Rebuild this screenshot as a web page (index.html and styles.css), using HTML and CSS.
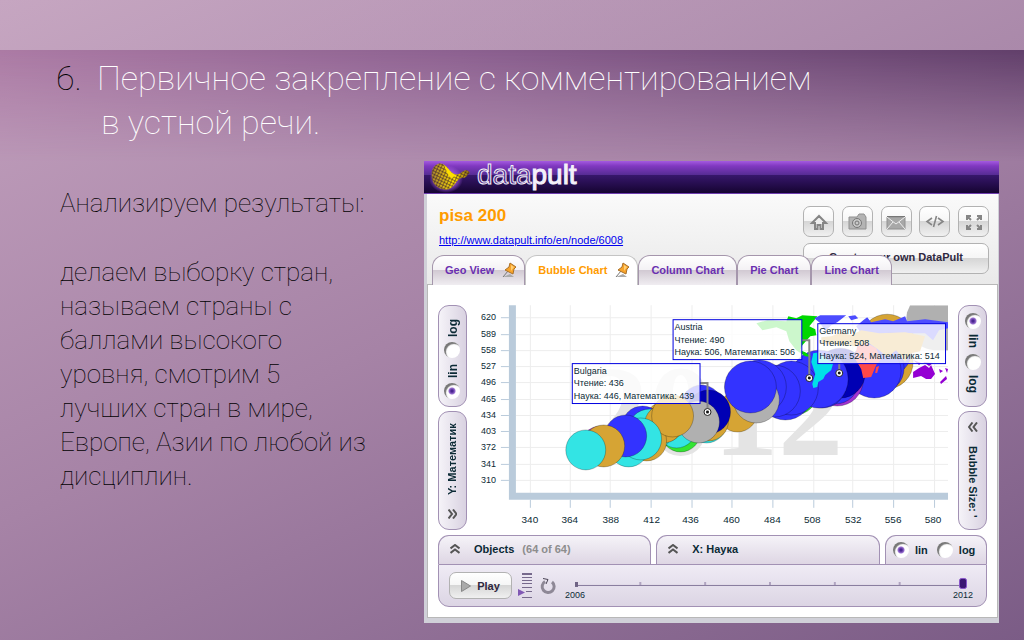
FILE: index.html
```html
<!DOCTYPE html>
<html lang="ru">
<head>
<meta charset="utf-8">
<title>Первичное закрепление</title>
<link rel="stylesheet" href="styles.css">
</head>
<body>
<main class="slide">
  <header class="slide-head">
    <h1 class="title"><span class="title-num">6.</span><span class="title-text">Первичное закрепление с комментированием<br><span class="title-second">в устной речи.</span></span></h1>
  </header>
  <div class="slide-body">
    <section class="notes">
      <p>Анализируем результаты:</p>
      <p>делаем выборку стран, называем страны с баллами высокого уровня, смотрим 5 лучших стран в мире, Европе, Азии по любой из дисциплин.</p>
    </section>
    <section class="widget">
      <div class="brand">
        <svg class="brand-mark" width="44" height="31" viewBox="0 0 44 31" aria-hidden="true">
          <defs>
            <radialGradient id="glow"><stop offset="0.5" stop-color="#a45ae0"/><stop offset="1" stop-color="#a45ae0" stop-opacity="0"/></radialGradient>
            <linearGradient id="gold" x1="0" x2="1"><stop offset="0" stop-color="#a88230"/><stop offset="0.6" stop-color="#ffe000"/><stop offset="1" stop-color="#8a6418"/></linearGradient>
            <pattern id="mesh" width="3" height="3" patternUnits="userSpaceOnUse" patternTransform="rotate(25)"><path d="M0 0H3M0 0V3" stroke="#2c1630" stroke-width="1"/></pattern>
          </defs>
          <ellipse cx="16" cy="17" rx="17" ry="14" fill="url(#glow)"/>
          <path d="M6 3C11 -1 16 3 20 9C25 14 29 13 32 10C36 7 38 8 40 11C37 12 37 16 33 16C28 15 26 22 21 26C15 30 4 26 2 17C1 10 2 6 6 3Z" fill="url(#gold)"/>
          <path d="M6 3C11 -1 16 3 20 9C25 14 29 13 32 10C36 7 38 8 40 11C37 12 37 16 33 16C28 15 26 22 21 26C15 30 4 26 2 17C1 10 2 6 6 3Z" fill="url(#mesh)"/>
          <path d="M14 3C18 5 20 11 26 13L22 16C17 14 17 9 14 3Z" fill="#ffe000"/>
        </svg>
        <span class="brand-name"><span class="brand-thin">data</span>pult</span>
      </div>
      <div class="frame">
        <div class="info">
          <div class="info-text">
            <h2>pisa 200</h2>
            <a href="#">http://www.datapult.info/en/node/6008</a>
          </div>
          <div class="actions">
            <div class="icon-row">
              <button class="icon-btn" aria-label="Home"><svg width="20" height="20" viewBox="0 0 20 20" fill="none" stroke="#858585" stroke-width="2"><path d="M3 11L10 4L17 11H14V17H11.5V13H8.500V17H6V11Z" fill="#eee"/></svg></button>
              <button class="icon-btn" aria-label="Camera"><svg width="20" height="20" viewBox="0 0 20 20"><path d="M2 5H10L12 2H17L19 5V17H2Z" fill="#b4b4b4" stroke="#909090"/><circle cx="10" cy="11" r="4.500" fill="#c8c8c8" stroke="#777"/><circle cx="10" cy="11" r="2" fill="none" stroke="#777"/></svg></button>
              <button class="icon-btn" aria-label="Mail"><svg width="20" height="20" viewBox="0 0 20 20"><path d="M1 5H19V17H1Z" fill="#a8a8a8" stroke="#909090"/><path d="M1 5L10 12L19 5M1 17L7 10M19 17L13 10" fill="none" stroke="#eee"/><path d="M1 4.500H19" stroke="#777"/></svg></button>
              <button class="icon-btn" aria-label="Embed"><svg width="20" height="20" viewBox="0 0 20 20" fill="none" stroke="#858585" stroke-width="1.600"><path d="M7 6L2 9.500L7 13M13 6L18 9.500L13 13M11.500 4L8.500 15"/></svg></button>
              <button class="icon-btn" aria-label="Full screen"><svg width="20" height="20" viewBox="0 0 20 20" fill="none" stroke="#858585" stroke-width="2"><path d="M3 8V4H7M3 4L7 8M13 4H17V8M17 4L13 8M3 13V17H7M3 17L7 13M13 17H17V13M17 17L13 13"/></svg></button>
            </div>
            <button class="create-btn">Create your own DataPult</button>
          </div>
        </div>
        <nav class="tabs">
          <button class="tab">Geo View <svg class="pin" width="15" height="16" viewBox="0 0 15 16"><path d="M1 15L12 15L8 12Z" fill="#aaa"/><path d="M1 15L6 9" stroke="#777"/><path d="M8 1L14 5L12 7L11 12L3 8L7 5Z" fill="#f7a32a" stroke="#a8702a"/><path d="M9 3L12 5L9 9" fill="#ffd077"/></svg></button>
          <button class="tab tab-on">Bubble Chart <svg class="pin" width="15" height="16" viewBox="0 0 15 16"><path d="M1 15L12 15L8 12Z" fill="#aaa"/><path d="M1 15L6 9" stroke="#777"/><path d="M8 1L14 5L12 7L11 12L3 8L7 5Z" fill="#f7a32a" stroke="#a8702a"/><path d="M9 3L12 5L9 9" fill="#ffd077"/></svg></button>
          <button class="tab">Column Chart</button>
          <button class="tab">Pie Chart</button>
          <button class="tab">Line Chart</button>
        </nav>
        <div class="panel">
          <div class="stage">
            <div class="side side-left">
              <div class="pill pill-scale">
                <label><input type="radio" name="ys" checked>lin</label>
                <label><input type="radio" name="ys">log</label>
              </div>
              <button class="pill pill-axis"><svg width="9" height="10" viewBox="0 0 9 10"><path d="M4 0.500L0.500 5L4 9.500M8.500 0.500L5 5L8.500 9.500" fill="none" stroke="#555" stroke-width="2"/></svg><span>Y: Математик</span></button>
            </div>
            <svg class="chart" viewBox="467 305 492 225">
              <defs><clipPath id="plot"><rect x="516" y="305" width="433" height="188"/></clipPath></defs>
              <path class="grid" d="M530.500 305V493M570.500 305V493M610.500 305V493M651.500 305V493M692.500 305V493M732.500 305V493M773.500 305V493M814.500 305V493M853.500 305V493M894.500 305V493M935.500 305V493M516 317.500H949M516 334.500H949M516 350.500H949M516 366.500H949M516 382.500H949M516 399.500H949M516 415.500H949M516 431.500H949M516 447.500H949M516 464.500H949M516 480.500H949"/>
              <text class="year" x="584" y="455">2012</text>
              <path class="ticks" d="M501 317.500H509M501 334.500H509M501 350.500H509M501 366.500H509M501 382.500H509M501 399.500H509M501 415.500H509M501 431.500H509M501 447.500H509M501 464.500H509M501 480.500H509M530.500 500V508M570.500 500V508M610.500 500V508M651.500 500V508M692.500 500V508M732.500 500V508M773.500 500V508M814.500 500V508M853.500 500V508M894.500 500V508M935.500 500V508"/>
              <path fill="#bacbdb" d="M509 305H516V493H949V500H509Z"/>
              <g class="nums nums-y">
                <text x="496" y="320">620</text><text x="496" y="337">589</text><text x="496" y="353">558</text><text x="496" y="369">527</text><text x="496" y="385">496</text><text x="496" y="402">465</text><text x="496" y="418">434</text><text x="496" y="434">403</text><text x="496" y="450">372</text><text x="496" y="467">341</text><text x="496" y="483">310</text>
              </g>
              <g class="nums nums-x">
                <text x="530" y="523">340</text><text x="570" y="523">364</text><text x="611" y="523">388</text><text x="652" y="523">412</text><text x="691" y="523">436</text><text x="732" y="523">460</text><text x="773" y="523">484</text><text x="813" y="523">508</text><text x="854" y="523">532</text><text x="894" y="523">556</text><text x="934" y="523">580</text>
              </g>
              <g class="bubbles" clip-path="url(#plot)">
                <path fill="#b0b0b0" d="M911 305H949V350H935C912 348 905 325 908 312Z"/>
                <circle class="gold" cx="888" cy="341" r="27"/>
                <circle class="gold" cx="887" cy="362" r="27"/>
                <circle class="blue" cx="888" cy="352" r="24"/>
                <circle class="blue" cx="880" cy="368" r="25"/>
                <circle class="blue" cx="875" cy="371" r="27"/>
                <circle class="violet" cx="838" cy="380" r="26"/>
                <circle class="blue" cx="836" cy="380" r="24"/>
                <circle class="navy" cx="841" cy="373" r="25"/>
                <circle class="green" cx="795" cy="391" r="24"/>
                <circle class="blue" cx="823" cy="384" r="24"/>
                <circle class="blue" cx="820" cy="379" r="29"/>
                <circle class="blue" cx="786" cy="393" r="27"/>
                <circle class="blue" cx="792" cy="388" r="27"/>
                <circle class="blue" cx="775" cy="391" r="26"/>
                <circle class="gold" cx="738" cy="412" r="20"/>
                <circle class="blue" cx="760" cy="387" r="27"/>
                <circle class="gray" cx="757" cy="400" r="23"/>
                <circle class="blue" cx="751" cy="387" r="26"/>
                <circle class="cyan" cx="707" cy="423" r="20"/>
                <circle class="gold" cx="709" cy="421" r="20"/>
                <circle class="blue" cx="702" cy="406" r="21"/>
                <circle class="navy" cx="709" cy="412" r="22"/>
                <circle class="green" cx="681" cy="432" r="20"/>
                <circle class="cyan" cx="677" cy="428" r="20"/>
                <circle class="gray" cx="699" cy="422" r="21"/>
                <circle class="gold" cx="665" cy="422" r="20"/>
                <circle class="blue" cx="643" cy="427" r="21"/>
                <circle class="cyan" cx="650" cy="431" r="22"/>
                <circle class="gold" cx="664" cy="424" r="19"/>
                <circle class="gold" cx="647" cy="441" r="20"/>
                <circle class="gold" cx="673" cy="416" r="21"/>
                <circle class="cyan" cx="629" cy="447" r="20"/>
                <circle class="cyan" cx="641" cy="439" r="21"/>
                <circle class="blue" cx="626" cy="436" r="21"/>
                <circle class="violet" cx="601" cy="446" r="20"/>
                <circle class="gold" cx="604" cy="446" r="21"/>
                <circle class="cyan" cx="586" cy="450" r="20"/>
              </g>
              <g clip-path="url(#plot)">
                <path fill="#00d800" d="M757 323L768 320L787 321L789 316L797 318L803 315L818 316L815 320L810 326L816 329L817 335L811 336L803 345L801 350L806 352L812 357L806 356L797 350L790 341L787 331L777 327L763 330Z"/>
                <path fill="#4c4cff" d="M815 318L821 315L847 315L838 322L832 325L826 331L821 323ZM849 316L856 315L859 318L852 320ZM857 326L864 320L868 317L872 322L886 319L894 321L906 316L908 321L926 319L949 322V328L940 330L934 340L926 333L905 333L891 332L878 334L862 333Z"/>
                <path fill="#dba12f" d="M822 337L832 336L842 332L852 335L862 330L880 333L906 332L926 336L921 351L912 353L906 362L897 350L888 357L880 350L870 343L856 346L822 343Z"/>
                <path fill="#00e0e8" d="M814 353L820 352L827 359L834 363L832 370L826 375L824 379L819 382L818 387L814 388L813 384L816 374L812 362Z"/>
                <path fill="#ff4848" d="M858 345L868 343L877 348L882 359L877 365L872 377L864 378L862 369L856 359ZM877 367L880 366L878 373L876 373Z"/>
                <path fill="#9400d3" d="M914 372L920 368L926 365L930 368L932 365L936 374L932 379L927 379L922 376L914 378ZM914 360L922 363L920 365ZM924 362L934 363L930 366ZM941 382L947 376L948 379L942 384ZM940 369L944 371L941 373ZM946 368L949 369L948 373Z"/>
              </g>
              <path fill="none" stroke="#858585" stroke-width="2" d="M700 383H708V408M802 340H810V374M840 362V369"/>
              <g class="tips">
                <rect x="572.500" y="363.500" width="128" height="40"/>
                <text x="574" y="374">Bulgaria</text><text x="574" y="386">Чтение: 436</text><text x="574" y="399">Наука: 446, Математика: 439</text>
                <rect x="673.500" y="319.500" width="129" height="40"/>
                <text x="675" y="330">Austria</text><text x="675" y="343">Чтение: 490</text><text x="675" y="355">Наука: 506, Математика: 506</text>
                <rect x="818.500" y="323.500" width="128" height="40"/>
                <text x="820" y="334">Germany</text><text x="820" y="346">Чтение: 508</text><text x="820" y="359">Наука: 524, Математика: 514</text>
              </g>
              <g fill="#fff" stroke="#222"><circle cx="708" cy="412" r="3.500"/><circle cx="810" cy="378" r="3.500"/><circle cx="840" cy="373" r="3.500"/></g>
              <g fill="#111"><circle cx="708" cy="412" r="1.500"/><circle cx="810" cy="378" r="1.500"/><circle cx="840" cy="373" r="1.500"/></g>
            </svg>
            <div class="side">
              <div class="pill pill-scale">
                <label><input type="radio" name="bs" checked>lin</label>
                <label><input type="radio" name="bs">log</label>
              </div>
              <button class="pill pill-axis"><svg width="10" height="10" viewBox="0 0 10 10"><path d="M4.500 0.500L1 5L4.500 9.500M9 0.500L5.500 5L9 9.500" fill="none" stroke="#555" stroke-width="2"/></svg><span>Bubble Size: '</span></button>
            </div>
          </div>
          <div class="dock">
            <div class="dock-tabs">
              <button class="dock-tab dock-objects"><svg width="10" height="10" viewBox="0 0 10 10"><path d="M0.500 4.500L5 1L9.500 4.500M0.500 9L5 5.500L9.500 9" fill="none" stroke="#555" stroke-width="2"/></svg><span>Objects</span><span class="count">(64 of 64)</span></button>
              <button class="dock-tab dock-x"><svg width="10" height="10" viewBox="0 0 10 10"><path d="M0.500 4.500L5 1L9.500 4.500M0.500 9L5 5.500L9.500 9" fill="none" stroke="#555" stroke-width="2"/></svg><span>X: Наука</span></button>
              <div class="dock-tab dock-scale">
                <label><input type="radio" name="xs" checked>lin</label>
                <label><input type="radio" name="xs">log</label>
              </div>
            </div>
            <div class="player">
              <button class="play"><svg width="10" height="12" viewBox="0 0 10 12"><path d="M0.500 0.500L9.500 6L0.500 11.500Z" fill="#aaa" stroke="#888"/></svg>Play</button>
              <svg width="16" height="26" viewBox="0 0 16 26"><path d="M4 1.500H14M4 4.500H14M4 7.500H14M4 10.500H14M4 14.500H14M8 18.500H14M4 24.500H14" stroke="#76698c"/><path d="M4 1H14" stroke="#76698c" stroke-width="2"/><path d="M0 16L7 19.500L0 23Z" fill="#8058b4"/></svg>
              <svg width="16" height="18" viewBox="0 0 16 18" fill="none"><path d="M5 4.500A6 6 0 1 0 12 5" stroke="#8e8896" stroke-width="3"/><path d="M3 1.500L8 2.500L6 7" stroke="#4a4455"/></svg>
              <svg class="timeline" viewBox="563 572 416 30">
                <path d="M577 586.500H965" stroke="#86799c"/>
                <path d="M641.500 583V586M706.500 583V586M771.500 583V586M836.500 583V586M901.500 583V586" stroke="#b0a4c0" stroke-width="2"/>
                <path d="M576 583H579V588H576Z" fill="#6f6384"/>
                <rect x="961.500" y="579.500" width="7" height="10" rx="2" fill="#3b1773" stroke="#8a55cc"/>
                <text x="576" y="599">2006</text><text x="965" y="599">2012</text>
              </svg>
            </div>
          </div>
        </div>
      </div>
    </section>
  </div>
</main>
</body>
</html>
```
FILE: styles.css
```css
* { box-sizing: border-box; }
body {
  margin: 0;
  font-family: "Liberation Sans", Arial, sans-serif;
  color: #0b2a35;
}
button { font: inherit; color: inherit; margin: 0; padding: 0; border: 0; background: none; }
.slide {
  min-height: 100vh;
  padding-top: 50px;
  background:
    linear-gradient(rgba(255, 255, 255, 0.05), rgba(255, 255, 255, 0.05)) 0 0 / 100% 50px no-repeat,
    linear-gradient(155deg, #c3a1be 0%, #a683a6 47%, #7b5c86 100%);
}
.slide-head {
  position: relative;
  height: 111px;
  padding: 6px 56px 0;
}
.slide-head::before {
  content: "";
  position: absolute;
  inset: 0;
  background: linear-gradient(90deg, #ab7aa4, #8c6090 45%, #613f6a);
  -webkit-mask-image: linear-gradient(173deg, #000, transparent 92%);
  mask-image: linear-gradient(#000, rgba(0, 0, 0, 0.5) 50%, transparent);
}
.title {
  position: relative;
  display: flex;
  margin: 0;
  font: 100 34px/44px Roboto, sans-serif;
  color: #fff;
}
.title-num { width: 41px; color: #000; }
.title-second { padding-left: 4px; }
.slide-body { display: flex; align-items: flex-start; padding-right: 25px; }
.notes {
  flex: none;
  width: 424px;
  padding: 25px 54px 0 60px;
  font: 100 26px/34px Roboto, sans-serif;
  color: #000;
}
.notes p { margin: 0 0 35px; }

.widget { flex: 1; min-width: 0; }
.brand {
  display: flex;
  align-items: center;
  height: 33px;
  padding-left: 6px;
  gap: 3px;
  background: linear-gradient(#a45ae0, #8038c0 5px, #562c94 14px, #37176c 14px, #150431 32px, #6e3db0 32px);
}
.brand-name { font-size: 28px; line-height: 28px; padding-bottom: 5px; color: #f4f0fa; -webkit-text-stroke: 1px #f4f0fa; }
.brand-thin { color: #4b2686; }
.frame {
  border: solid #d0d0d8;
  border-width: 0 1px 5px 3px;
  background: linear-gradient(#fafafa, #e9e9e9 90px, #fff 90px);
}
.info { display: flex; justify-content: space-between; padding: 12px 9px 0 12px; }
.info h2 { margin: 0; font-size: 17px; line-height: 20px; color: #ff9c00; }
.info a { display: block; margin-top: 8px; font-size: 11px; line-height: 13px; color: #0000ee; }
.icon-row { display: flex; justify-content: space-between; }
.actions { width: 186px; }
.icon-btn, .create-btn, .play {
  border: 1px solid #b2b2b2;
  border-radius: 7px;
  background: linear-gradient(#fff, #f5f5f5 50%, #d6d6d6 50%, #f0f0f0);
}
.icon-btn { display: grid; place-items: center; width: 31px; height: 31px; }
.create-btn { width: 100%; height: 31px; margin-top: 6px; padding-bottom: 3px; font-size: 11px; font-weight: bold; color: #2f2840; }
.tabs { position: relative; display: flex; margin-top: -19px; padding-left: 5px; }
.tab {
  display: flex;
  align-items: center;
  gap: 8px;
  height: 30px;
  padding: 0 12px 1px;
  border: solid #a596ac;
  border-width: 1px 1px 0;
  border-radius: 12px 12px 0 0;
  background: linear-gradient(#fff, #f3f1f4 50%, #d2cad3 50%, #f0edf1);
  font-size: 11px;
  font-weight: bold;
  color: #6a2fb0;
  white-space: nowrap;
}
.tab-on { position: relative; z-index: 1; background: #fff; color: #ff9c00; border-color: #c4c4c4; }
.pin { margin-right: -5px; }
.panel {
  margin-top: -1px;
  padding: 20px 10px 10px;
  border: 1px solid #b8b8b8;
  background: #fff;
}
.stage { display: flex; }
.chart { flex: 1; min-width: 0; display: block; }
.side { display: flex; flex-direction: column; gap: 4px; width: 29px; flex: none; }
.pill {
  border: 1px solid #a291b4;
  border-radius: 11px;
  background: linear-gradient(90deg, #f5f3f8, #d9d2e1);
  writing-mode: vertical-rl;
  font-size: 12px;
  font-weight: bold;
}
.side-left .pill { transform: rotate(180deg); background: linear-gradient(270deg, #f5f3f8, #d9d2e1); }
.side-left { flex-direction: column; }
.pill-scale { display: flex; gap: 6px; height: 102px; padding: 7px 4px; }
.pill label { display: flex; align-items: center; gap: 5px; width: 19px; }
.pill-axis { display: flex; align-items: center; justify-content: flex-start; gap: 14px; height: 119px; padding: 10px 0; font-size: 11px; white-space: nowrap; }
.pill-axis span { line-height: 15px; }
input[type="radio"] {
  appearance: none;
  flex: none;
  width: 16px;
  height: 16px;
  margin: 0;
  border-radius: 50%;
  background: #fff;
  box-shadow: inset 2px 2px 1px #777;
}
input[type="radio"]:checked { background: radial-gradient(circle, #4a2592 1px, #9a70d0 3px, #fff 4px); }
.side-left input { box-shadow: inset -2px -2px 1px #777; }

.grid { stroke: #ededed; fill: none; }
.ticks { stroke: #bacbdb; fill: none; }
.year { font: bold 130px "Liberation Serif", serif; fill: #e4e4e4; }
.nums, .tips, .timeline { font-size: 9px; fill: #0b2a35; }
.nums-y { text-anchor: end; }
.nums-x, .timeline { text-anchor: middle; }
.nums-x { font-size: 10px; }
.tips rect { fill: #fff; fill-opacity: 0.8; stroke: #0000e0; }
.bubbles circle { stroke: #000; stroke-opacity: 0.25; }
.blue { fill: #3333ff; }
.navy { fill: #0000b4; }
.gold { fill: #d6a434; }
.cyan { fill: #33e4e4; }
.gray { fill: #b0b0b0; }
.green { fill: #33e433; }
.violet { fill: #a033d0; }

.dock { margin-top: 5px; font-size: 12px; font-weight: bold; }
.dock-tabs { display: flex; gap: 5px; }
.dock-tab {
  display: flex;
  align-items: center;
  gap: 14px;
  height: 29px;
  padding: 0 11px 2px;
  border: 1px solid #a291b4;
  border-bottom: 0;
  border-radius: 11px 11px 0 0;
  background: linear-gradient(#f5f3f8, #ded6e4);
  font-size: 11px;
  white-space: nowrap;
}
.dock-objects { flex: 213; }
.dock-x { flex: 225; }
.dock-scale { flex: none; width: 102px; padding: 0 7px; gap: 9px; }
.dock-scale label { display: flex; align-items: center; gap: 6px; }
.count { margin-left: -6px; color: #8d8d8d; }
.player {
  display: flex;
  align-items: center;
  gap: 6px;
  height: 43px;
  padding: 0 9px 0 10px;
  border: 1px solid #a291b4;
  border-radius: 0 0 11px 11px;
  background: linear-gradient(#efebf5, #dcd5e4);
}
.play { display: flex; align-items: center; justify-content: center; gap: 6px; flex: none; width: 63px; height: 27px; font-size: 11px; color: #2f2840; }
.player > svg { flex: none; }
.player > .timeline { flex: 1; min-width: 0; font-weight: normal; }
```
